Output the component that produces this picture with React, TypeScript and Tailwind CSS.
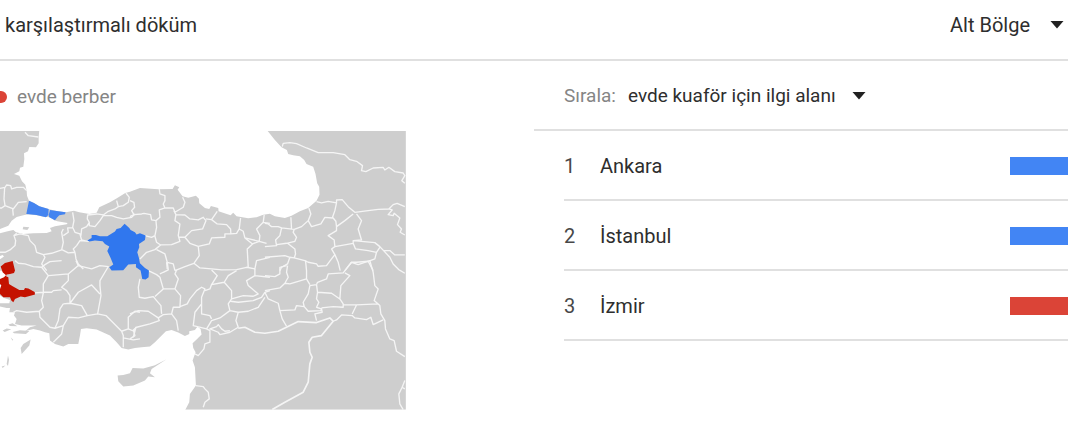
import React from 'react';

type Row = { rank: number; name: string; bar: string };

const rows: Row[] = [
  { rank: 1, name: 'Ankara', bar: 'bg-[#4285f4]' },
  { rank: 2, name: 'İstanbul', bar: 'bg-[#4285f4]' },
  { rank: 3, name: 'İzmir', bar: 'bg-[#db4437]' },
];

const water = [
  // Black Sea
  'M118 28L116 50L116 68L108 80L88 79L84 92L72 98L73 115L70 138L60 141L58 152L42 160L58 165L66 182L76 192L80 210L81 225L87 240L102 247L118 257L145 265L170 271L197 275L222 270L238 275L268 280L290 276L298 260L330 245L352 232L376 217L390 213L420 202L475 206L518 205L525 194L538 200L533 207L548 227L565 231L588 225L597 234L598 248L615 262L628 265L633 256L655 262L656 272L692 284L700 276L710 287L745 293L770 290L790 282L810 279L825 287L855 292L875 285L900 272L925 262L950 240L959 222L958 198L952 188L947 160L940 138L920 130L913 118L900 107L880 104L865 100L861 88L845 80L825 58L801 28Z',
  // Marmara
  'M0 325L25 315L35 300L50 289L70 284L85 281L110 284L130 288L150 290L163 299L172 302L203 307L200 311L165 317L150 322L155 332L140 337L100 338L70 340L48 335L40 328L20 333L0 338Z',
  'M0 406L8 403L12 408L0 416Z',
  'M0 450L8 452L20 462L14 472L0 478Z',
  'M0 488L4 496L0 506Z',
  // Aegean and Mediterranean
  'M0 525L12 532L30 538L28 548L0 548L0 558L20 562L30 562L28 575L45 575L42 585L50 595L45 610L65 615L110 615L90 620L75 632L100 625L120 630L135 635L148 638L150 660L165 670L190 678L205 670L235 670L240 645L243 625L260 623L290 627L330 645L350 665L365 682L385 687L405 682L425 680L450 678L465 665L480 650L498 632L515 628L535 636L555 646L568 640L568 632L585 628L593 618L602 625L605 642L590 657L578 668L580 682L587 695L578 720L585 740L588 795L570 820L568 845L555 870L0 870Z',
];

const islands = [
  'M353 765L370 763L390 758L398 742L430 744L465 734L500 716L455 745L450 758L465 770L445 768L435 780L400 795L370 798L355 782Z',
  'M62 682L70 670L92 657L88 675L65 700Z',
  'M24 705L27 718L24 736L20 730Z',
  'M5 738L16 735L8 742Z',
  'M8 630L20 624L34 626L14 634Z',
  'M38 634L60 629L88 631L78 640L42 638Z',
  'M25 612L38 608L52 617L30 616Z',
  'M70 318L88 320L82 328L68 326Z',
  'M32 650L40 658L37 660Z',
];

// Province and country lines, one list per sheet of the map
const borders = [
  {
    x: 0,
    y: 0,
    d: 'M75 35L85 45L115 49M0 203L15 200L20 193L32 195L35 205L50 200L70 200L80 210M14 200L12 235L15 255L40 265L55 245L80 243M15 255L5 262L0 262M38 265L40 285M0 395L15 395L30 388L45 375L47 360L42 345L50 338M42 345L60 340L85 345L90 360L105 375L110 395L130 402L155 398L185 388L190 365L185 335L190 325M130 402L135 410L125 430L140 450M187 388L205 397L225 395L228 415L235 430L250 445M218 275L222 300L218 320L225 335L240 340L245 358L262 362M218 322L203 322L205 335L190 345M243 345L245 325L260 318L268 305L262 295L263 283L290 280L310 283L325 272L345 265L355 258L350 240M268 305L268 315L285 318L300 300L310 285L335 285L350 290L370 295L395 290L405 280M355 258L370 255L385 245L388 230L378 217M268 362L240 360L230 375L220 385L225 395',
  },
  {
    x: 390,
    y: 0,
    d: 'M0 240L12 245L14 260L5 270L12 282L35 280L42 278L62 282L65 298L78 300L90 290L88 268L105 262L100 250L105 240L105 225L90 220L88 205M78 300L80 320L75 345L65 350L45 345M0 288L12 282M105 262L130 262L135 275L160 260L165 245L158 230M75 347L80 365L92 373L75 387L50 395L30 415M92 373L125 372L150 362L145 345L150 310L135 300L138 282L132 270M138 282L165 283L180 295L205 298L220 290L228 300L218 325L185 330L165 350L148 350M228 295L245 297L262 272M245 297L262 310L290 312L302 325L303 340L285 340L285 350L245 352L238 370L205 377L180 368L165 350M303 340L320 338L328 325L332 292M328 325L340 332L345 352L388 362L390 345L380 325L400 305L403 282M400 305L420 308M345 352L368 370L352 385L355 440M368 370L388 362L410 368M205 377L208 405L192 428L165 438L135 450M192 428L210 442L245 445L275 448L320 447L350 440L375 445L380 420L420 410M80 387L105 400L112 425L130 430L135 450M110 425L112 445',
  },
  {
    x: 795,
    y: 0,
    d: 'M52 78L55 68L75 66L95 69L125 82L160 96L205 96L240 102L255 117L275 122L293 135L290 150L303 153L325 142L355 140L360 148L372 140L390 153L415 157L420 165L411 180L420 188M155 243L170 247L190 242L215 247L215 238L232 237L250 258L270 275L310 270L340 266L372 265L385 252L397 248L420 258M372 265L382 268L370 282L385 285L388 278L405 292L398 312L410 325L406 335L420 343M215 247L210 270L203 290L213 302L215 318L240 300L265 280M203 292L180 290L168 310L140 318L130 300L138 280L132 262M130 300L110 318L88 326L50 322L40 318L20 318L10 310L0 308M78 290L80 325M50 322L45 345L32 358L35 375L0 378M35 372L65 368L90 362L95 350L85 335L88 326M68 368L90 385L92 400L88 412L75 410L60 405L0 410M88 412L120 420L130 425L155 430L160 437L185 435L200 415L210 402L200 385L210 378L265 368L265 360L290 358L280 325L290 300L275 280M215 318L215 330L190 345L208 358L210 378M265 360L330 366L345 378L375 410L385 430L403 448M265 368L272 385L310 390L335 395L345 380M335 395L330 415L310 422L275 425L260 425L240 450M310 422L325 450M355 390L375 390L390 403L420 403M210 402L220 425L226 450M75 410L68 430L50 440L45 450',
  },
  {
    x: 0,
    y: 420,
    d: 'M45 0L55 8L75 10L100 18L125 20L135 12L150 3L185 0M125 20L145 45L130 70L130 95L105 97M145 45L180 42L205 40L235 15L228 0M205 40L205 60L185 80L200 90L210 105L210 128L190 130M130 95L155 95L160 90L185 88M130 97L125 120L130 140L118 152L120 170L150 200L165 203L175 180L180 145L190 130M235 15L275 25L300 15L325 18L315 35L300 60L300 75L303 105L293 160L318 165L365 212L370 225L370 260M210 128L235 95L275 73L300 100M210 128L245 135L262 165L293 160M262 165L235 172L205 170L190 195L165 203M190 195L185 220L160 245M118 152L80 155L50 150L40 155M365 212L385 205L385 170L405 152L420 155M370 232L400 238L420 235M385 205L402 212L408 200L400 230',
  },
  {
    x: 390,
    y: 420,
    d: 'M0 160L25 150L55 152L85 172L88 180L60 190L20 200L10 208L15 225L0 235M85 172L100 162L125 160L140 180L145 210M30 55L25 80L28 110L45 113L70 108L80 120L93 135L95 160M55 30L80 42L90 50L100 85L75 108M100 85L135 85L145 55L135 40L140 28M90 40L100 35L115 28L112 5M135 85L152 105L150 140L130 140L125 160M150 138L172 130L180 115L200 90L215 80L225 85L215 110L215 130L195 155L190 195L230 205L245 180M215 130L215 160L240 165L245 175M245 28L262 45L245 72L283 65L295 45L320 30M245 72L240 85L225 90M283 65L305 90L305 115L295 130L300 150L270 172L245 180L230 205M305 115L340 105L370 107L385 100L355 75L350 60L375 45L375 25M302 122L325 125L370 120L395 110L405 95L420 90M300 150L325 155L355 152L385 140L405 110M325 155L318 180L325 200L300 215L270 222L265 215L240 205L260 198L265 192L275 205L285 212L300 210M230 205L240 210L240 245L225 250L222 265L205 285L195 280M375 45L420 50M198 375L220 378L225 385L235 395L238 415L225 425L220 440',
  },
  {
    x: 795,
    y: 420,
    d: 'M0 45L30 48L45 40L45 20L65 15M0 90L45 82L60 68L75 70L125 55L135 72M60 68L70 50L65 35L68 15M0 95L10 115L40 128L45 150L90 148L95 135L118 138L115 125L130 100L135 75L155 72M45 150L52 175L65 197M125 55L125 30L122 0M155 72L158 65L185 55L190 40L235 37L260 5M155 72L158 95L155 115L162 125L155 140L170 145L168 150L130 152L118 138M158 95L200 98L225 115L235 130L235 140L205 138L170 142M225 115L228 75L255 45L240 37M260 5L280 12L315 0L325 35L330 75L340 85L328 120L345 135L348 160L360 180L362 205L375 235L388 240L395 272L420 288M235 132L275 133L340 130M275 133L262 160M205 182L215 178L230 163L262 165L270 172L305 177L318 170L325 192L355 178M170 145L172 155L150 160L155 180M403 28L420 38M420 360L412 380L420 385M412 380L402 400L405 430L415 447',
  },
];

const southBorder =
  'M715 623L735 620L765 635L795 638L835 632L895 603L950 606L990 592L1000 602L965 645L937 650L927 665L930 695L937 710L930 730L925 785L910 815L855 845L817 867';

const istanbul =
  'M87 240L102 247L118 257L146 265L145 283L138 290L110 283L79 280ZM150 268L170 271L197 275L195 281L178 284L172 290L165 299L148 290L146 284Z';

const ankara =
  'M262 360L275 352L275 343L288 343L300 347L322 347L345 333L350 325L362 322L374 309L388 322L392 328L405 335L410 342L420 338L437 345L435 358L417 370L418 380L412 395L417 412L420 428L435 442L447 450L446 470L437 477L427 475L422 450L408 440L408 430L385 432L370 449L335 450L328 440L340 432L332 412L322 391L328 378L315 370L308 362L285 360L268 363Z';

const izmir =
  'M2 438L15 427L38 421L45 450L42 457L30 460L20 462L18 467L25 470L27 490L38 497L58 508L72 508L75 502L85 504L104 514L105 522L75 530L62 528L45 535L40 545L34 540L30 530L10 530L0 520L0 506L4 494L0 490L0 475L12 470L18 464L8 455Z';

function Arrow() {
  return (
    <svg viewBox="0 0 14 8" className="h-2 w-3.5 shrink-0 fill-[#212121]" aria-hidden="true">
      <path d="M0.5 0h13L7 7.5z" />
    </svg>
  );
}

function RegionMap() {
  return (
    <svg viewBox="0 31 1218 836" className="block w-[76%]" role="img" aria-label="Türkiye">
      <rect y="31" width="1218" height="836" fill="#cecece" />
      <path d={water.join('')} fill="#fff" />
      <path d={islands.join('')} fill="#cecece" />
      <g fill="none" stroke="#f5f5f5" strokeWidth="4" strokeLinejoin="round">
        {borders.map((b) => (
          <path key={`${b.x}-${b.y}`} d={b.d} transform={`translate(${b.x} ${b.y})`} />
        ))}
        <path d={southBorder} strokeWidth="5" />
      </g>
      <path d={istanbul} fill="#4484f0" />
      <path d={ankara} fill="#3077ee" />
      <path d={izmir} fill="#c41200" />
    </svg>
  );
}

export default function App() {
  return (
    <main className="overflow-hidden bg-white font-['Roboto','Noto_Sans',sans-serif] text-xl leading-6 text-[#2e2e2e]">
      <header className="flex h-[61px] items-center justify-between border-b-2 border-[#e0e0e0] pr-1 pb-2.5 pl-[5px]">
        <h1>karşılaştırmalı döküm</h1>
        <div className="flex items-center gap-5">
          <select aria-label="Bölge türü" className="appearance-none bg-transparent">
            <option>Alt Bölge</option>
          </select>
          <Arrow />
        </div>
      </header>

      <div className="flex">
        <section className="w-1/2">
          <div className="flex h-[70px] items-center gap-2.5 pt-0.5 text-[19px] text-[#858585]">
            <span className="-ml-[5px] size-3 rounded-full bg-[#db4437]" />
            <span>evde berber</span>
          </div>
          <RegionMap />
        </section>

        <section className="w-1/2">
          <div className="flex h-[70px] items-center border-b-2 border-[#e0e0e0] pt-0.5 pl-[30px] text-[19px]">
            <label htmlFor="sort" className="mr-3 text-[#858585]">
              Sırala:
            </label>
            <select id="sort" className="mr-4 appearance-none bg-transparent">
              <option>evde kuaför için ilgi alanı</option>
            </select>
            <Arrow />
          </div>
          <ol className="pl-[30px]">
            {rows.map((row) => (
              <li key={row.rank} className="flex h-[70px] items-center border-b-2 border-[#e0e0e0] pt-0.5">
                <span className="w-9 text-[#484848]">{row.rank}</span>
                <span>{row.name}</span>
                <span className={`ml-auto h-[18px] w-[58px] ${row.bar}`} />
              </li>
            ))}
          </ol>
        </section>
      </div>
    </main>
  );
}
